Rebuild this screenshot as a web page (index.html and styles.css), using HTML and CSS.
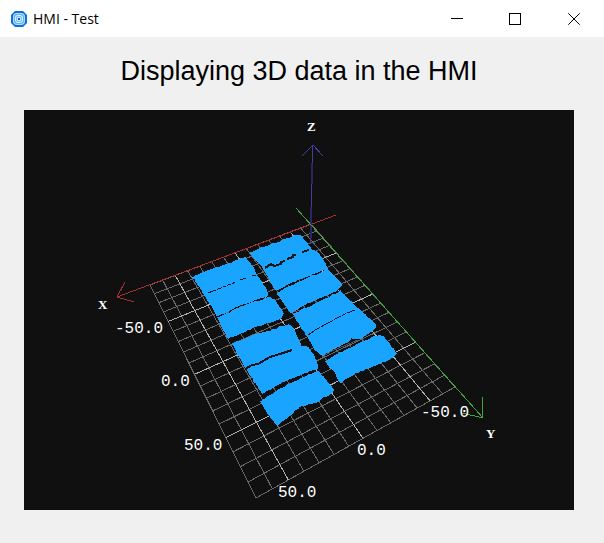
FILE: index.html
```html
<!DOCTYPE html>
<html lang="en">
<head>
<meta charset="utf-8">
<title>HMI - Test</title>
<link rel="stylesheet" href="styles.css">
</head>
<body>
<header class="titlebar">
  <svg class="app-icon" viewBox="0 0 16 16" aria-hidden="true">
    <path d="M4 0H12L16 4V12L12 16H4L0 12V4Z" fill="#0872dc"/>
    <rect x="2" y="2" width="12" height="12" rx="4" fill="#b5dcff"/>
    <rect x="3" y="3" width="10" height="10" rx="3" fill="#64b0fa"/>
    <rect x="4.5" y="4.5" width="7" height="7" rx="2" fill="#78bdff" stroke="#e5f4ff"/>
    <rect x="6" y="6" width="4" height="4" rx="1" fill="#d8eeff"/>
    <rect x="7" y="7" width="2" height="2" fill="#075eb8"/>
  </svg>
  <span class="app-name">HMI - Test</span>
  <div class="controls">
    <button class="control" type="button" aria-label="Minimize"><svg viewBox="0 0 12 12"><path d="M0 5.5H12"/></svg></button>
    <button class="control" type="button" aria-label="Maximize"><svg viewBox="0 0 12 12"><path d="M.5 .5H11.5V11.5H.5Z"/></svg></button>
    <button class="control" type="button" aria-label="Close"><svg class="smooth" viewBox="0 0 12 12"><path d="M.3 .3L11.7 11.7M11.7 .3L.3 11.7"/></svg></button>
  </div>
</header>
<main class="content">
  <h1 class="heading">Displaying 3D data in the HMI</h1>
  <svg class="viewer" viewBox="24 110 550 400" role="img" aria-label="3D view">
    <g id="grid"></g>
    <path class="axis-x" d="M336 215L117 297M125 282L117 297L134 302"/>
    <g id="cloud"></g>
    <path class="axis-z" d="M313 145L310 245M302 156L313 145L323 156"/>
    <path class="axis-z-dim" d="M312 163V184M311 207V238"/>
    <path class="axis-y" d="M296 208L483 418M482 397L483 418L462 413"/>
    <g class="seams">
      <path d="M208 293L236 282" stroke-dasharray="5 1 3 1"/>
      <path d="M240 280L246 278M252 276L256 275"/>
      <path d="M265 268L271 264L274 266L281 264V262L285 261M287 259L293 257V255L296 255M302 252L309 250" stroke-width="2"/>
      <path d="M245 369L252 365L258 364L270 357L280 354L292 350" stroke-width="2"/>
      <path d="M308 335L317 329L328 323L339 317L347 313L355 310" stroke-dasharray="8 1 5 1"/>
      <path d="M322 357L332 351L346 345L358 340" stroke="#4b5258"/>
    </g>
    <path d="M294 312L300 310" stroke="#a43b39"/>
    <g class="axis-name">
      <text x="307" y="131">Z</text><text x="98" y="309">X</text><text x="486" y="438">Y</text>
    </g>
    <g class="tick">
      <text x="115" y="333">-50.0</text><text x="161" y="386">0.0</text><text x="184" y="450">50.0</text>
      <text x="278" y="497">50.0</text><text x="357" y="455">0.0</text><text x="421" y="417">-50.0</text>
    </g>
  </svg>
</main>
<script src="scene.js"></script>
</body>
</html>
```
FILE: styles.css
```css
* { box-sizing: border-box; }
body { margin: 0; background: #f0f0f0; color: #000; font-family: "Liberation Sans", Arial, sans-serif; }
.titlebar { display: flex; align-items: center; height: 37px; padding-left: 11px; background: #fff; }
.app-icon { width: 16px; height: 16px; }
.app-name { margin-left: 6px; font: 14px/20px "Open Sans", sans-serif; }
.controls { display: flex; align-self: stretch; margin-left: auto; }
.control { display: grid; place-items: center; width: 58px; padding: 0; border: 0; background: transparent; }
.control:last-child { width: 60px; }
.control svg { width: 12px; height: 12px; fill: none; stroke: #000; shape-rendering: crispEdges; }
.control .smooth { shape-rendering: auto; }
.content { padding: 16px 30px 24px 24px; }
.heading { margin: 0 0 21px; font-size: 27px; line-height: 36px; font-weight: 400; text-align: center; }
.viewer { display: block; width: 100%; background: #101010; fill: none; shape-rendering: crispEdges; }
.grid-line { stroke: #686868; }
.grid-major { stroke: #b0b0b0; }
.axis-x { stroke: #a33030; }
.axis-y { stroke: #41a33f; }
.axis-z { stroke: #403f9e; }
.axis-z-dim { stroke: #292663; stroke-width: 2px; }
.patch { fill: #19a5ff; }
.seams { stroke: #101518; }
.tick { fill: #fff; font: 16px "Liberation Mono", monospace; }
.axis-name { fill: #fff; font: bold 13px "Liberation Serif", serif; }
```
FILE: scene.js
```js
const NS = "http://www.w3.org/2000/svg";

function add(parent, name, attrs) {
  const node = document.createElementNS(NS, name);
  for (const key in attrs) node.setAttribute(key, attrs[key]);
  parent.appendChild(node);
}

// Perspective projection of the floor plane, u and v in 0..1.
function project(u, v) {
  const w = 0.11838 * u - 0.27662 * v + 1;
  return [(197.816 * u + 35.185 * v + 150) / w, (-34.483 * u + 75.243 * v + 285) / w];
}

const grid = document.getElementById("grid");
function gridLine(a, b, major) {
  add(grid, "path", { class: major ? "grid-major" : "grid-line", d: "M" + a + "L" + b });
}
for (const major of [false, true]) {
  for (let i = 0; i <= 14; i++)
    if ((i % 5 === 2) === major) gridLine(project(i / 14, 0), project(i / 14, 1), major);
  for (let j = 0; j <= 18; j++)
    if ((j % 5 === 4) === major) gridLine(project(0, j / 18), project(1, j / 18), major);
}

// Outlines of the scanned surfaces.
const patches = [
  [193,277,203,272,240,259,245,257,249,261,253,267,257,275,262,282,266,288,268,296,250,302,235,308,217,317,206,297],
  [217,318,235,309,250,303,270,297,275,300,284,314,281,319,262,325,245,332,228,339],
  [232,344,252,335,270,330,288,324,292,326,298,338,301,346,308,347,317,360,318,369,295,377,280,384,262,394,247,371],
  [260,401,275,392,295,381,317,371,320,372,334,390,332,393,317,402,300,407,280,424,277,426,270,417],
  [250,253,257,249,275,243,295,235,300,235,307,243,312,250,317,251,326,263,328,269,310,275,290,284,275,291,265,272,262,267],
  [276,293,290,286,310,277,328,269,343,285,338,290,320,298,305,305,291,313],
  [293,314,310,306,325,299,340,291,356,306,368,317,377,325,373,330,368,334,362,339,352,339,342,345,327,354,322,356,315,350,307,337],
  [325,362,337,354,353,346,380,334,384,337,397,353,393,358,372,367,355,374,340,383,335,373]
];

let seed = 7;
function jitter() {
  seed = (seed * 16807) % 2147483647;
  return (seed / 2147483647 - 0.5) * 1.2;
}

const cloud = document.getElementById("cloud");
for (const p of patches) {
  const points = [];
  for (let i = 0; i < p.length; i += 2) {
    const k = (i + 2) % p.length;
    const dx = p[k] - p[i], dy = p[k + 1] - p[i + 1];
    const steps = Math.max(1, Math.round(Math.hypot(dx, dy) / 3));
    for (let s = 0; s < steps; s++)
      points.push([p[i] + dx * s / steps + jitter(), p[i + 1] + dy * s / steps + jitter()]);
  }
  add(cloud, "polygon", { class: "patch", points: points.join(" ") });
}
```
